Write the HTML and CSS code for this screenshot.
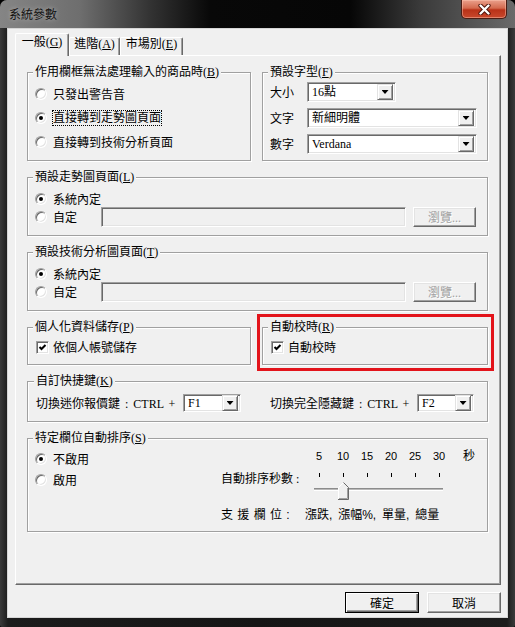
FILE: index.html
```html
<!DOCTYPE html>
<html lang="zh-Hant">
<head>
    <meta charset="UTF-8">
    <meta name="viewport" content="width=device-width, initial-scale=1.0">
    <title>系統參數</title>
    <link rel="stylesheet" href="styles.css">
</head>
<body>
    <div class="window">
        <div class="titlebar">
            <span class="title">系統參數</span>
            <button class="close-btn" type="button" aria-label="關閉">
                <svg width="13" height="11" viewBox="0 0 13 11">
                    <path d="M2.5 1.5 L10.5 9.5 M10.5 1.5 L2.5 9.5" stroke="#4b1209" stroke-width="4.2" stroke-linecap="round"/>
                    <path d="M2.5 1.5 L10.5 9.5 M10.5 1.5 L2.5 9.5" stroke="#fff" stroke-width="2.4" stroke-linecap="round"/>
                </svg>
            </button>
        </div>

        <div class="client">
            <div class="tabs">
                <div class="tab tab-general active">一般<span class="key">(<u>G</u>)</span></div>
                <div class="tab tab-advanced">進階<span class="key">(<u>A</u>)</span></div>
                <div class="tab tab-market">市場別<span class="key">(<u>E</u>)</span></div>
            </div>

            <div class="panel">
                <div class="group-row">
                    <div class="group group-left group-action">
                        <div class="group-title">作用欄框無法處理輸入的商品時<span class="key">(<u>B</u>)</span></div>
                        <div class="option-list">
                            <div class="option"><span class="radio"></span><span>只發出警告音</span></div>
                            <div class="option"><span class="radio checked"></span><span class="focus">直接轉到走勢圖頁面</span></div>
                            <div class="option"><span class="radio"></span><span>直接轉到技術分析頁面</span></div>
                        </div>
                    </div>

                    <div class="group group-right group-font">
                        <div class="group-title">預設字型<span class="key">(<u>F</u>)</span></div>
                        <div class="font-rows">
                            <div class="font-row">
                                <span class="font-label">大小</span>
                                <div class="combo combo-size"><span class="combo-value">16點</span><span class="combo-arrow"></span></div>
                            </div>
                            <div class="font-row">
                                <span class="font-label">文字</span>
                                <div class="combo combo-wide"><span class="combo-value">新細明體</span><span class="combo-arrow"></span></div>
                            </div>
                            <div class="font-row">
                                <span class="font-label">數字</span>
                                <div class="combo combo-wide"><span class="combo-value">Verdana</span><span class="combo-arrow"></span></div>
                            </div>
                        </div>
                    </div>
                </div>

                <div class="group group-page">
                    <div class="group-title">預設走勢圖頁面<span class="key">(<u>L</u>)</span></div>
                    <div class="option option-first"><span class="radio checked"></span><span>系統內定</span></div>
                    <div class="custom-row">
                        <div class="option option-custom"><span class="radio"></span><span>自定</span></div>
                        <div class="field"></div>
                        <button class="btn btn-browse" type="button" disabled>瀏覽...</button>
                    </div>
                </div>

                <div class="group group-page">
                    <div class="group-title">預設技術分析圖頁面<span class="key">(<u>T</u>)</span></div>
                    <div class="option option-first"><span class="radio checked"></span><span>系統內定</span></div>
                    <div class="custom-row">
                        <div class="option option-custom"><span class="radio"></span><span>自定</span></div>
                        <div class="field"></div>
                        <button class="btn btn-browse" type="button" disabled>瀏覽...</button>
                    </div>
                </div>

                <div class="group-row">
                    <div class="group group-left group-check">
                        <div class="group-title">個人化資料儲存<span class="key">(<u>P</u>)</span></div>
                        <div class="option option-check">
                            <span class="checkbox"><svg width="9" height="9" viewBox="0 0 9 9"><polyline points="1.5,4 3.5,6 7.5,2" fill="none" stroke="#000" stroke-width="2"/></svg></span>
                            <span>依個人帳號儲存</span>
                        </div>
                    </div>

                    <div class="group group-right group-check highlighted">
                        <div class="group-title">自動校時<span class="key">(<u>R</u>)</span></div>
                        <div class="option option-check">
                            <span class="checkbox"><svg width="9" height="9" viewBox="0 0 9 9"><polyline points="1.5,4 3.5,6 7.5,2" fill="none" stroke="#000" stroke-width="2"/></svg></span>
                            <span>自動校時</span>
                        </div>
                    </div>
                </div>

                <div class="group group-hotkey">
                    <div class="group-title">自訂快捷鍵<span class="key">(<u>K</u>)</span></div>
                    <div class="hotkey-row">
                        <span class="hotkey-label">切換迷你報價鍵 : CTRL +</span>
                        <div class="combo combo-small combo-f1"><span class="combo-value">F1</span><span class="combo-arrow"></span></div>
                        <span class="hotkey-label hotkey-label-second">切換完全隱藏鍵 : CTRL +</span>
                        <div class="combo combo-small combo-f2"><span class="combo-value">F2</span><span class="combo-arrow"></span></div>
                    </div>
                </div>

                <div class="group group-sort">
                    <div class="group-title">特定欄位自動排序<span class="key">(<u>S</u>)</span></div>
                    <div class="sort-body">
                        <div class="sort-options">
                            <div class="option"><span class="radio checked"></span><span>不啟用</span></div>
                            <div class="option"><span class="radio"></span><span>啟用</span></div>
                        </div>
                        <div class="sort-slider">
                            <div class="tick-labels">
                                <span>5</span><span>10</span><span>15</span><span>20</span><span>25</span><span>30</span>
                                <span class="tick-unit">秒</span>
                            </div>
                            <div class="slider-row">
                                <span class="slider-label">自動排序秒數 :</span>
                                <svg class="slider" width="140" height="32" viewBox="0 0 140 32">
                                    <g fill="#000">
                                        <rect x="9" y="3" width="1" height="4"/>
                                        <rect x="33" y="3" width="1" height="4"/>
                                        <rect x="57" y="3" width="1" height="4"/>
                                        <rect x="81" y="3" width="1" height="4"/>
                                        <rect x="105" y="3" width="1" height="4"/>
                                        <rect x="129" y="3" width="1" height="4"/>
                                    </g>
                                    <rect x="4" y="18" width="129" height="1" fill="#8c8c8c"/>
                                    <rect x="4" y="19" width="129" height="1" fill="#b9b9b9"/>
                                    <rect x="4" y="20" width="129" height="1" fill="#fff"/>
                                    <polygon points="28,30 28,17.5 33.5,12 39,17.5 39,30" fill="#f0f0f0"/>
                                    <polyline points="28.5,29.5 28.5,17.5 33.5,12.5" fill="none" stroke="#fff"/>
                                    <polyline points="33.5,12.5 38.5,17.5 38.5,29.5 28,29.5" fill="none" stroke="#696969"/>
                                    <polyline points="37.5,18 37.5,28.5 29,28.5" fill="none" stroke="#a0a0a0"/>
                                </svg>
                            </div>
                            <div class="support">
                                <span class="support-label">支 援 欄 位 :</span><span class="support-list">漲跌, 漲幅%, 單量, 總量</span>
                            </div>
                        </div>
                    </div>
                </div>
            </div>

            <div class="dialog-buttons">
                <button class="btn btn-dialog btn-default" type="button">確定</button>
                <button class="btn btn-dialog" type="button">取消</button>
            </div>
        </div>
    </div>
</body>
</html>
```

FILE: styles.css
```css
* {
    box-sizing: border-box;
}

body {
    margin: 0;
    background: #000;
    font-family: "Liberation Serif", "Noto Sans CJK TC", serif;
    font-size: 12px;
    color: #000;
}

button {
    font-family: inherit;
    font-size: 12px;
    color: #000;
    padding: 0;
    margin: 0;
}

.window {
    width: 515px;
    height: 627px;
    display: flex;
    flex-direction: column;
    background: linear-gradient(90deg, #3a3a3a 0, #1c1c1c 8px, #151515 50%, #1c1c1c calc(100% - 8px), #3a3a3a 100%);
    border-radius: 7px 7px 2px 2px;
    overflow: hidden;
}

/* 標題列 */
.titlebar {
    height: 28px;
    flex: none;
    display: flex;
    align-items: flex-start;
    background: linear-gradient(90deg, #858585 0, #6e6e6e 80px, #333 150px, #080808 210px, #060606 350px, #3a3a3a 420px, #6a6a6a 515px);
}

.title {
    padding-left: 9px;
    line-height: 30px;
    color: #111;
    text-shadow: 0 0 5px rgba(255, 255, 255, 0.45);
}

.close-btn {
    margin-left: auto;
    margin-right: 8px;
    width: 46px;
    height: 19px;
    border: 1px solid #4a1d14;
    border-top: none;
    border-radius: 0 0 5px 5px;
    background: linear-gradient(#eaa08c, #d36a4e 45%, #b93218 55%, #c9482c);
    box-shadow: inset 0 0 0 1px rgba(255, 205, 185, 0.45);
    display: flex;
    align-items: center;
    justify-content: center;
}

.client {
    height: 590px;
    flex: none;
    margin: 0 7px;
    background: #f0f0f0;
    border: 1px solid #d6d6d6;
    padding: 4px 6px 0 7px;
    display: flex;
    flex-direction: column;
}

/* 分頁 */
.tabs {
    height: 22px;
    display: flex;
    align-items: flex-end;
}

.tab {
    height: 18px;
    border: 1px solid;
    border-color: #fff #696969 transparent #fff;
    border-bottom: none;
    border-radius: 2px 2px 0 0;
    box-shadow: inset -1px 0 0 #a0a0a0;
    line-height: 13px;
    text-align: center;
    white-space: nowrap;
}

.tab.active {
    height: 23px;
    margin-bottom: -1px;
    line-height: 16px;
    background: #f0f0f0;
    position: relative;
    z-index: 1;
}

.tab-general { width: 54px; }
.tab-advanced { width: 51px; }
.tab-market { width: 63px; }

.key u {
    text-decoration: underline;
    text-underline-offset: 1px;
}

.panel {
    height: 530px;
    border: 1px solid;
    border-color: #fff #696969 #696969 #fff;
    box-shadow: inset -1px -1px 0 #a0a0a0;
    padding: 16px 12px 0 11px;
    display: flex;
    flex-direction: column;
    gap: 16px;
}

/* 群組框 */
.group-row {
    display: flex;
    gap: 11px;
}

.group {
    border: 1px solid #a0a0a0;
    box-shadow: 1px 1px 0 #fff, inset 1px 1px 0 #fff;
    padding: 0 8px 0 7px;
}

.group-left {
    width: 224px;
    flex: none;
}

.group-right {
    flex: 1;
}

.group-title {
    width: fit-content;
    margin: -8px 0 0 -2px;
    padding: 0 2px;
    line-height: 14px;
    background: #f0f0f0;
    white-space: nowrap;
}

.option {
    display: flex;
    align-items: center;
    gap: 6px;
    height: 16px;
    white-space: nowrap;
}

.radio {
    flex: none;
    width: 12px;
    height: 12px;
    border-radius: 50%;
    background: #fff;
    border: 1px solid;
    border-color: #a0a0a0 #fff #fff #a0a0a0;
    box-shadow: inset 1px 1px 0 #696969, inset -1px -1px 0 #e3e3e3;
    position: relative;
}

.radio.checked::after {
    content: "";
    position: absolute;
    left: 3px;
    top: 3px;
    width: 4px;
    height: 4px;
    border-radius: 50%;
    background: #000;
}

.checkbox {
    flex: none;
    width: 13px;
    height: 13px;
    margin-left: 1px;
    background: #fff;
    border: 1px solid;
    border-color: #a0a0a0 #fff #fff #a0a0a0;
    box-shadow: inset 1px 1px 0 #696969, inset -1px -1px 0 #e3e3e3;
    display: flex;
    align-items: center;
    justify-content: center;
}

.option-check {
    gap: 4px;
    margin-top: 5px;
}

.focus {
    outline: 1px dotted #000;
    line-height: 14px;
}

.group-action .option-list {
    display: flex;
    flex-direction: column;
    gap: 8px;
    padding: 7px 0 10px;
}

/* 下拉選單 */
.combo {
    display: flex;
    align-items: center;
    height: 20px;
    background: #fff;
    border: 1px solid;
    border-color: #a0a0a0 #fff #fff #a0a0a0;
    box-shadow: inset 1px 1px 0 #696969, inset -1px -1px 0 #e3e3e3;
    padding: 1px 2px 1px 4px;
}

.combo-value {
    flex: 1;
    line-height: 16px;
    white-space: nowrap;
}

.combo-arrow {
    flex: none;
    width: 16px;
    height: 16px;
    background: #f0f0f0;
    border: 1px solid;
    border-color: #e3e3e3 #696969 #696969 #e3e3e3;
    box-shadow: inset 1px 1px 0 #fff, inset -1px -1px 0 #a0a0a0;
    display: flex;
    align-items: center;
    justify-content: center;
}

.combo-arrow::after {
    content: "";
    width: 7px;
    height: 4px;
    background: #000;
    clip-path: polygon(0 0, 100% 0, 50% 100%);
}

.group-font .font-rows {
    display: flex;
    flex-direction: column;
    gap: 6px;
    padding: 3px 0 6px;
}

.font-row {
    display: flex;
    align-items: center;
}

.font-label {
    width: 37px;
    flex: none;
}

.combo-size { width: 89px; }
.combo-wide { width: 170px; }

/* 預設頁面 */
.group-page {
    padding-bottom: 8px;
}

.option-first {
    margin-top: 7px;
}

.custom-row {
    display: flex;
    align-items: center;
    gap: 7px;
}

.option-custom {
    width: 59px;
}

.field {
    width: 305px;
    height: 20px;
    background: #f0f0f0;
    border: 1px solid;
    border-color: #a0a0a0 #fff #fff #a0a0a0;
    box-shadow: inset 1px 1px 0 #696969, inset -1px -1px 0 #e3e3e3;
}

.btn {
    background: #f0f0f0;
    border: 1px solid;
    border-color: #fff #696969 #696969 #fff;
    box-shadow: inset -1px -1px 0 #a0a0a0, inset 1px 1px 0 #e3e3e3;
    text-align: center;
}

.btn:disabled {
    color: #a0a0a0;
    text-shadow: 1px 1px 0 #fff;
}

.btn-browse {
    width: 63px;
    height: 20px;
}

/* 個人化 / 自動校時 */
.group-check {
    padding-bottom: 9px;
}

.highlighted {
    position: relative;
}

.highlighted::after {
    content: "";
    position: absolute;
    top: -14px;
    left: -6px;
    right: -7px;
    bottom: -7px;
    border: 3px solid #e3141b;
    pointer-events: none;
}

/* 快捷鍵 */
.group-hotkey {
    padding: 0 8px 9px 8px;
}

.hotkey-row {
    display: flex;
    align-items: center;
    margin-top: 6px;
}

.hotkey-label {
    width: 147px;
    flex: none;
    white-space: nowrap;
    word-spacing: 2px;
}

.hotkey-label-second {
    margin-left: 29px;
}

.combo-small {
    height: 18px;
    padding-top: 0;
    padding-bottom: 0;
}

.combo-f1 { width: 58px; }
.combo-f2 { width: 57px; }

/* 自動排序 */
.group-sort {
    padding-bottom: 9px;
}

.sort-body {
    display: flex;
}

.sort-options {
    width: 186px;
    flex: none;
    display: flex;
    flex-direction: column;
    gap: 5px;
    padding-top: 6px;
}

.sort-slider {
    padding-top: 4px;
}

.tick-labels {
    display: flex;
    margin-left: 86px;
    line-height: 14px;
    font-family: "Liberation Sans", "Noto Sans CJK TC", sans-serif;
    font-size: 11px;
}

.tick-labels span {
    width: 24px;
    text-align: center;
}

.tick-labels .tick-unit {
    width: auto;
    margin-left: 12px;
    font-size: 12px;
}

.slider-row {
    display: flex;
    align-items: flex-start;
    margin-top: 7px;
    height: 32px;
}

.slider-label {
    width: 89px;
    flex: none;
    margin-top: 1px;
    line-height: 16px;
    white-space: nowrap;
}

.slider {
    display: block;
}

.support {
    margin-top: 6px;
    line-height: 14px;
    white-space: nowrap;
    font-family: "Liberation Sans", "Noto Sans CJK TC", sans-serif;
}

.support-label {
    display: inline-block;
    width: 84px;
    word-spacing: 1px;
}

.support-list {
    word-spacing: 2.5px;
}

/* 底部按鈕 */
.dialog-buttons {
    display: flex;
    justify-content: flex-end;
    gap: 8px;
    margin-top: 7px;
}

.btn-dialog {
    width: 74px;
    height: 21px;
}

.btn-default {
    border: 1px solid #000;
    box-shadow: inset 1px 1px 0 #fff, inset -1px -1px 0 #696969, inset -2px -2px 0 #a0a0a0;
}
```
